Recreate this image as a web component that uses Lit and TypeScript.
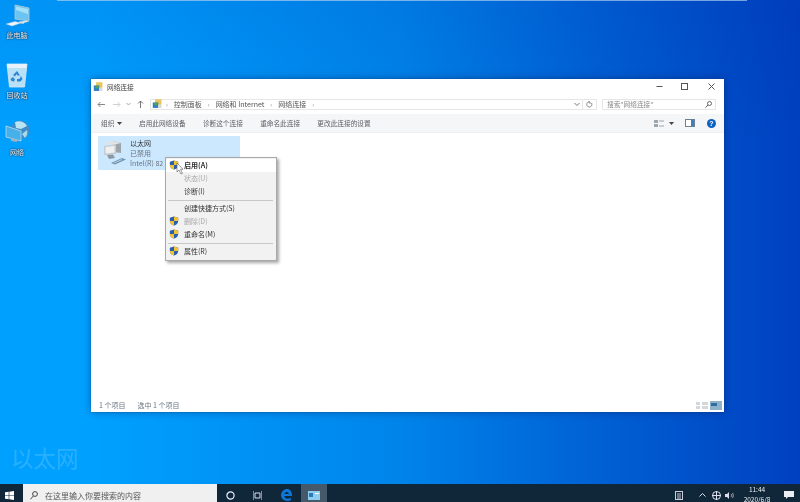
import { LitElement, css, html, svg } from 'lit';
import { customElement } from 'lit/decorators.js';

const shield = svg`<svg class="shield" viewBox="0 0 12 12" width="10" height="10">
  <path d="M6 .5 11 2v4c0 3-2.300 4.600-5 5.500C3.300 10.600 1 9 1 6V2z" fill="#2a5fb0"/>
  <path d="M6 .5 11 2v4H6zM6 6v5.500C3.300 10.600 1 9 1 6z" fill="#f2c230"/>
</svg>`;

const netFolder = svg`<svg viewBox="0 0 14 14" width="11" height="12">
  <rect x="4" y="1" width="8" height="7" fill="#e8c65a"/>
  <rect x="1" y="5" width="7" height="7" fill="#2f7fc8"/>
  <circle cx="5" cy="7" r="2" fill="#58a83e"/>
  <rect x="8" y="8" width="4" height="4" fill="#d8d8d8"/>
</svg>`;

@customElement('app-root')
export class AppRoot extends LitElement {
  static styles = css`
    :host {
      display: flex;
      flex-direction: column;
      width: 800px;
      height: 502px;
      overflow: hidden;
      font-family: "Noto Sans CJK SC", "Liberation Sans", sans-serif;
      font-size: 7px;
      color: #3a3a3a;
      filter: blur(.35px);
      background: #0a6fe0;
    }
    .desktop {
      position: relative;
      flex: 1;
      overflow: hidden;
      background:
        linear-gradient(180deg, rgba(0,30,150,.1) 0%, rgba(0,30,150,0) 30%),
        linear-gradient(90deg, #00a0ff 0%, #00a0ff 12%, #0084ea 50%, #0060d4 75%, #0040c0 100%);
    }
    .strip {
      position: absolute;
      left: 57px;
      top: 0;
      width: 690px;
      height: 1px;
      background: rgba(170,205,240,.7);
    }
    .dicon {
      position: absolute;
      left: 0;
      width: 34px;
      display: flex;
      flex-direction: column;
      align-items: center;
      gap: 3px;
      color: #eef6fb;
      font-size: 7px;
      line-height: 8px;
      text-shadow: 0 0 2px #0c2238, 0 0 1px #0c2238;
    }
    .pc { top: 4px; }
    .bin { top: 62px; }
    .lan { top: 120px; }
    .watermark {
      position: absolute;
      left: 11px;
      top: 442px;
      font-size: 22.500px;
      line-height: 30px;
      color: rgba(255,255,255,.16);
    }
    .win {
      position: absolute;
      left: 91px;
      top: 79px;
      width: 633px;
      height: 333px;
      background: #fff;
      display: flex;
      flex-direction: column;
      box-shadow: 0 0 1px rgba(30,60,100,.8), 0 0 8px rgba(0,20,80,.4);
    }
    .title {
      height: 15px;
      display: flex;
      align-items: center;
      padding: 0 0 0 2px;
      gap: 3px;
      color: #444;
      font-size: 6.700px;
    }
    .title .grow { flex: 1; }
    .caps { display: flex; margin-right: 9.500px; }
    .caps svg { display: block; }
    .caps .maxb { margin: 0 20px 0 18px; }
    .nav {
      height: 20px;
      display: flex;
      align-items: center;
      color: #777;
    }
    .navbtns { width: 59px; display: flex; align-items: center; padding-left: 6px; box-sizing: border-box; }
    .fwd { margin-left: 8px; }
    .drop { margin-left: 5px; }
    .up { margin-left: 6px; }
    .addr {
      width: 433px;
      height: 11px;
      border: 1px solid #e6e6e6;
      box-sizing: border-box;
      display: flex;
      align-items: center;
      padding-left: 1px;
      color: #555;
    }
    .crumbs { display: flex; align-items: center; margin-left: 3px; gap: 6px; flex: 1; }
    .sep { font-size: 6px; color: #888; }
    .chev { margin-right: 2px; }
    .refresh {
      width: 14px; height: 11px; border: 1px solid #e6e6e6; border-left: none;
      box-sizing: border-box; display: flex; align-items: center; justify-content: center;
    }
    .search {
      margin-left: 5px;
      width: 114px;
      height: 11px;
      border: 1px solid #e6e6e6;
      box-sizing: border-box;
      display: flex;
      align-items: center;
      justify-content: space-between;
      padding: 0 3px 0 4px;
      color: #8a8a8a;
      font-size: 6.700px;
    }
    .tools {
      height: 19px;
      background: #f5f6f7;
      display: flex;
      align-items: center;
      padding-left: 10px;
      color: #5a6068;
      border-bottom: 1px solid #f0f0f0;
      box-sizing: border-box;
      font-size: 6.670px;
    }
    .tools .cmd { margin-right: 17.300px; }
    .tools .first { margin-right: 16.700px; display: flex; align-items: center; gap: 3px; }
    .tools .right { margin-left: auto; display: flex; align-items: center; margin-right: 8.500px; }
    .varrow { margin-left: 4.500px; }
    .pane { margin-left: 11.500px; }
    .help { margin-left: 11.500px; }
    .body { flex: 1; position: relative; padding: 3px 7px; }
    .item {
      width: 142px;
      height: 34px;
      background: #cce8ff;
      display: flex;
      gap: 2px;
      padding-left: 2px;
      box-sizing: border-box;
      align-items: center;
    }
    .item .lines { line-height: 10px; color: #6b7480; }
    .item .name { color: #333; }
    .status {
      height: 14px;
      display: flex;
      align-items: center;
      padding: 0 2px 0 8px;
      color: #6a7580;
      gap: 12px;
    }
    .status .right { margin-left: auto; display: flex; gap: 2px; }
    .menu {
      position: absolute;
      left: 165px;
      top: 157px;
      width: 112px;
      background: #f2f2f2;
      border: 1px solid #a8a8a8;
      box-sizing: border-box;
      padding: 1px 0 2px;
      box-shadow: 2px 2px 3px rgba(0,0,0,.35);
      z-index: 3;
      color: #333;
    }
    .row {
      height: 13px;
      display: flex;
      align-items: center;
      padding-left: 18px;
      position: relative;
      line-height: 13px;
      overflow: hidden;
    }
    .row .shield { position: absolute; left: 3px; top: 1px; }
    .row.on { background: #fff; font-weight: 700; }
    .row.off { color: #a8a8a8; }
    .rule { height: 1px; background: #c8c8c8; margin: 1.500px 3px 1.500px 2px; }
    .cursor { position: absolute; left: 176px; top: 163px; z-index: 4; }
    .taskbar {
      height: 18px;
      background: #0f2739;
      display: flex;
      color: #e8eef2;
    }
    .start {
      width: 23px;
      display: flex;
      justify-content: center;
      align-items: center;
      padding: 4px 4px 0 0;
      box-sizing: border-box;
    }
    .tsearch {
      width: 194px;
      height: 18px;
      background: #f0f0f0;
      display: flex;
      align-items: center;
      gap: 7px;
      padding: 4px 0 0 7px;
      box-sizing: border-box;
      color: #555;
      font-size: 8px;
    }
    .tb {
      height: 18px;
      padding-top: 4px;
      box-sizing: border-box;
      display: flex;
      align-items: center;
      justify-content: center;
    }
    .w27 { width: 27px; }
    .w30 { width: 30px; }
    .active { width: 26px; background: #46596a; }
    .tray { margin-left: auto; display: flex; height: 18px; }
    .tray svg { margin-top: 7px; display: block; }
    .tchev { margin-left: 15.500px; margin-top: 9px !important; }
    .tglobe { margin-left: 6px; }
    .tsound { margin-left: 4px; }
    .clock {
      width: 38px;
      margin-left: 4.500px;
      text-align: center;
      line-height: 9.500px;
      height: 18px;
      padding-top: 1px;
      box-sizing: border-box;
      overflow: hidden;
      font-size: 6.500px;
    }
    .tnote { margin: 0 6px 0 8px; }
  `;

  render() {
    return html`
      <div class="desktop">
        <div class="strip"></div>

        <div class="dicon pc">
          <svg viewBox="0 0 26 24" width="26" height="24">
            <path d="M11 1 25 4v13l-14-2z" fill="#6cc4f2" stroke="#b8c8d4" stroke-width=".8"/>
            <path d="M12 2.500 24 5v5L12 6z" fill="#a4e0f8"/>
            <path d="M15 17l5 1v2l-5-1z" fill="#b0bec8"/>
            <path d="M2 20l9-2.500 6 1.500-9 3z" fill="#eef4f8" stroke="#b8c8d4" stroke-width=".4"/>
            <path d="M15 18l7-1.500 3 1-7 2z" fill="#d8e2e8"/>
          </svg>
          <span>此电脑</span>
        </div>
        <div class="dicon bin">
          <svg viewBox="0 0 24 26" width="24" height="26">
            <path d="M2 2h20l-2.500 23h-15z" fill="#b8e0f6" stroke="#d8e8f2" stroke-width=".8"/>
            <path d="M2 2h20l-.5 4h-19z" fill="#e8f2f8"/>
            <path d="M12 9l3 4.500h-2.500l-1-1.500-1.500 2.500-2-1.500z" fill="#2a86d6"/>
            <path d="M16 14l1.500 3-2 2.500H12v-2.500h2.500zM8 15l2 2.500-1 2-2.500-.5-1-2z" fill="#2a86d6"/>
          </svg>
          <span>回收站</span>
        </div>
        <div class="dicon lan">
          <svg viewBox="0 0 24 25" width="24" height="25">
            <circle cx="15" cy="10" r="9.500" fill="#3f8cc8"/>
            <path d="M10 2c4-2 10-.5 12 4l-6 3-5-1z" fill="#b8e4f4"/>
            <path d="M17 14l5-4c1 3 0 6-2 8z" fill="#a8d8ea"/>
            <path d="M1 6l15 5v10L1 17z" fill="#45b0ea" stroke="#c4d8e4" stroke-width=".8"/>
            <path d="M6 18l6 2v2l-6-1z" fill="#9fb2c0"/>
          </svg>
          <span>网络</span>
        </div>

        <div class="watermark">以太网</div>

        <div class="win">
          <div class="title">
            ${netFolder}
            <span>网络连接</span>
            <span class="grow"></span>
            <div class="caps">
              <svg width="7" height="7" viewBox="0 0 7 7"><path d="M.5 3.500h6" stroke="#555"/></svg>
              <svg class="maxb" width="7" height="7" viewBox="0 0 7 7"><rect x=".5" y=".5" width="6" height="6" fill="none" stroke="#555"/></svg>
              <svg width="7" height="7" viewBox="0 0 7 7"><path d="M.5.500l6 6M6.500.500l-6 6" stroke="#555"/></svg>
            </div>
          </div>
          <div class="nav">
            <div class="navbtns">
              <svg width="8" height="7" viewBox="0 0 8 7"><path d="M8 3.500H1M3.500 1 1 3.500 3.500 6" fill="none" stroke="#888"/></svg>
              <svg class="fwd" width="8" height="7" viewBox="0 0 8 7"><path d="M0 3.500h7M4.500 1 7 3.500 4.500 6" fill="none" stroke="#d0d0d0"/></svg>
              <svg class="drop" width="5" height="4" viewBox="0 0 5 4"><path d="M.5 1 2.500 3l2-2" fill="none" stroke="#aaa"/></svg>
              <svg class="up" width="7" height="8" viewBox="0 0 7 8"><path d="M3.500 8V1M1 3.500 3.500 1 6 3.500" fill="none" stroke="#777"/></svg>
            </div>
            <div class="addr">
              ${netFolder}
              <div class="crumbs">
                <span class="sep">›</span><span>控制面板</span>
                <span class="sep">›</span><span>网络和 Internet</span>
                <span class="sep">›</span><span>网络连接</span>
                <span class="sep">›</span>
              </div>
              <svg class="chev" width="6" height="4" viewBox="0 0 6 4"><path d="M.5 1 3 3.500 5.500 1" fill="none" stroke="#777"/></svg>
            </div>
            <div class="refresh">
              <svg width="7" height="7" viewBox="0 0 7 7"><path d="M5.500 2a2.600 2.600 0 1 1-2-1.200M3 0v2h2" fill="none" stroke="#777" stroke-width=".8"/></svg>
            </div>
            <div class="search">
              <span>搜索"网络连接"</span>
              <svg width="7" height="7" viewBox="0 0 7 7"><circle cx="4.500" cy="2.500" r="2" fill="none" stroke="#666"/><path d="M3 4 .5 6.500" stroke="#666"/></svg>
            </div>
          </div>
          <div class="tools">
            <span class="first"><span>组织</span>
              <svg width="5" height="3" viewBox="0 0 5 3"><path d="M0 0h5L2.500 3z" fill="#444"/></svg>
            </span>
            <span class="cmd">启用此网络设备</span>
            <span class="cmd">诊断这个连接</span>
            <span class="cmd">重命名此连接</span>
            <span class="cmd">更改此连接的设置</span>
            <div class="right">
              <svg width="10" height="9" viewBox="0 0 10 9"><path d="M0 1h4v3H0zM0 5h4v3H0z" fill="#9aa6b0"/><path d="M5 2h5M5 7h5" stroke="#9aa6b0"/></svg>
              <svg class="varrow" width="5" height="3" viewBox="0 0 5 3"><path d="M0 0h5L2.500 3z" fill="#444"/></svg>
              <svg class="pane" width="10" height="8" viewBox="0 0 10 8"><rect x=".5" y=".5" width="9" height="7" fill="#fff" stroke="#6b8096"/><rect x="6" y="1" width="3" height="6" fill="#3f7fc0"/></svg>
              <svg class="help" width="9" height="9" viewBox="0 0 9 9"><circle cx="4.500" cy="4.500" r="4.500" fill="#0b62c4"/><text x="4.500" y="7" font-size="7" font-weight="700" fill="#fff" text-anchor="middle" font-family="Liberation Sans">?</text></svg>
            </div>
          </div>
          <div class="body">
            <div class="item">
              <svg viewBox="0 0 28 28" width="28" height="28">
                <path d="M13 2l8 2v10l-8-1z" fill="#9ea5aa"/>
                <path d="M13 2 5 4l8 2 8-2z" fill="#dfe3e5"/>
                <path d="M4 7l12-1.500V15L4 16z" fill="#c6cbce"/>
                <path d="M5.500 8l9-1v6.500l-9 1z" fill="#eef0f1"/>
                <path d="M7 16l6-.5 2 3.500-6 1z" fill="#8f979e"/>
                <path d="M11 24l11-5 4 1.500-11 5z" fill="#6f96b4"/>
                <path d="M14 24l8-3.500" stroke="#d6e4ee" stroke-width=".7"/>
              </svg>
              <div class="lines">
                <div class="name">以太网</div>
                <div>已禁用</div>
                <div>Intel(R) 82</div>
              </div>
            </div>
          </div>
          <div class="status">
            <span>1 个项目</span>
            <span>选中 1 个项目</span>
            <div class="right">
              <svg width="12" height="9" viewBox="0 0 12 9"><path d="M0 1h4v3H0zM0 5h4v3H0zM6 1h6v3H6zM6 5h6v3H6z" fill="#d4d8dc"/></svg>
              <svg width="12" height="9" viewBox="0 0 12 9"><rect width="12" height="9" fill="#8fb2cc"/><rect x="1" y="2" width="6" height="3" fill="#2f6f9f"/></svg>
            </div>
          </div>
        </div>

        <div class="menu">
          <div class="row on">${shield}<span>启用(A)</span></div>
          <div class="row off">状态(U)</div>
          <div class="row">诊断(I)</div>
          <div class="rule"></div>
          <div class="row">创建快捷方式(S)</div>
          <div class="row off">${shield}<span>删除(D)</span></div>
          <div class="row">${shield}<span>重命名(M)</span></div>
          <div class="rule"></div>
          <div class="row">${shield}<span>属性(R)</span></div>
        </div>
        <svg class="cursor" width="8" height="12" viewBox="0 0 8 12"><path d="M1 0v9l2-2 2 4 1.500-.7-2-4H7z" fill="#fff" stroke="#555" stroke-width=".6"/></svg>
      </div>

      <div class="taskbar">
        <div class="start">
          <svg width="9" height="9" viewBox="0 0 9 9"><path d="M0 1.300 3.700.800v3.400H0zM4.300.700 9 0v4.200H4.300zM0 4.800h3.700v3.400L0 7.700zM4.300 4.800H9V9l-4.700-.7z" fill="#fff"/></svg>
        </div>
        <div class="tsearch">
          <svg width="8" height="9" viewBox="0 0 8 9"><circle cx="5" cy="3" r="2.400" fill="none" stroke="#444"/><path d="M3.300 5 .5 8.300" stroke="#444"/></svg>
          <span>在这里输入你要搜索的内容</span>
        </div>
        <div class="tb w27">
          <svg width="9" height="9" viewBox="0 0 9 9"><circle cx="4.500" cy="4.500" r="3.600" fill="none" stroke="#eef" stroke-width="1.200"/></svg>
        </div>
        <div class="tb w27">
          <svg width="9" height="9" viewBox="0 0 9 9"><path d="M2 2h5v5H2z" fill="none" stroke="#dde"/><path d="M0 0h1v9H0zM8 0h1v9H8z" fill="#889"/></svg>
        </div>
        <div class="tb w30">
          <svg width="12" height="12" viewBox="0 0 11 11"><path d="M1 6C1 2 4 0 6.500 0 9 0 11 2 11 6.500H4c0 2.500 3.500 3 6 1.500v2.300C6 12 1 10 1 6zM4.100 4.500H8C8 2.500 5 2 4.100 4.500z" fill="#0c78d8"/></svg>
        </div>
        <div class="tb active">
          <svg width="12" height="9" viewBox="0 0 12 9"><rect width="12" height="9" fill="#8fcdf0"/><rect x="1" y="2" width="4" height="4" fill="#2f78b8"/><rect x="7" y="2" width="4" height="1" fill="#fff"/></svg>
        </div>
        <div class="tray">
          <svg width="8" height="9" viewBox="0 0 8 9"><rect x=".5" y=".5" width="7" height="8" fill="none" stroke="#ccd"/><path d="M2 3h4M2 5h4M2 7h4" stroke="#ccd"/></svg>
          <svg class="tchev" width="7" height="4" viewBox="0 0 7 4"><path d="M.5 3.500 3.500.500l3 3" fill="none" stroke="#dde"/></svg>
          <svg class="tglobe" width="9" height="9" viewBox="0 0 9 9"><circle cx="4.500" cy="4.500" r="4" fill="none" stroke="#dde"/><path d="M0 4.500h9M4.500 0v9" stroke="#dde"/></svg>
          <svg class="tsound" width="9" height="9" viewBox="0 0 9 9"><path d="M0 3h2l2-2v7L2 6H0z" fill="#dde"/><path d="M6 3c.7 1 .7 2 0 3M7.500 2c1 1.500 1 3.500 0 5" fill="none" stroke="#dde" stroke-width=".7"/></svg>
          <div class="clock">11:44<br />2020/6/8</div>
          <svg class="tnote" width="10" height="9" viewBox="0 0 10 9"><path d="M0 0h10v6H4L2 8V6H0z" fill="#e8eef2"/></svg>
        </div>
      </div>
    `;
  }
}
